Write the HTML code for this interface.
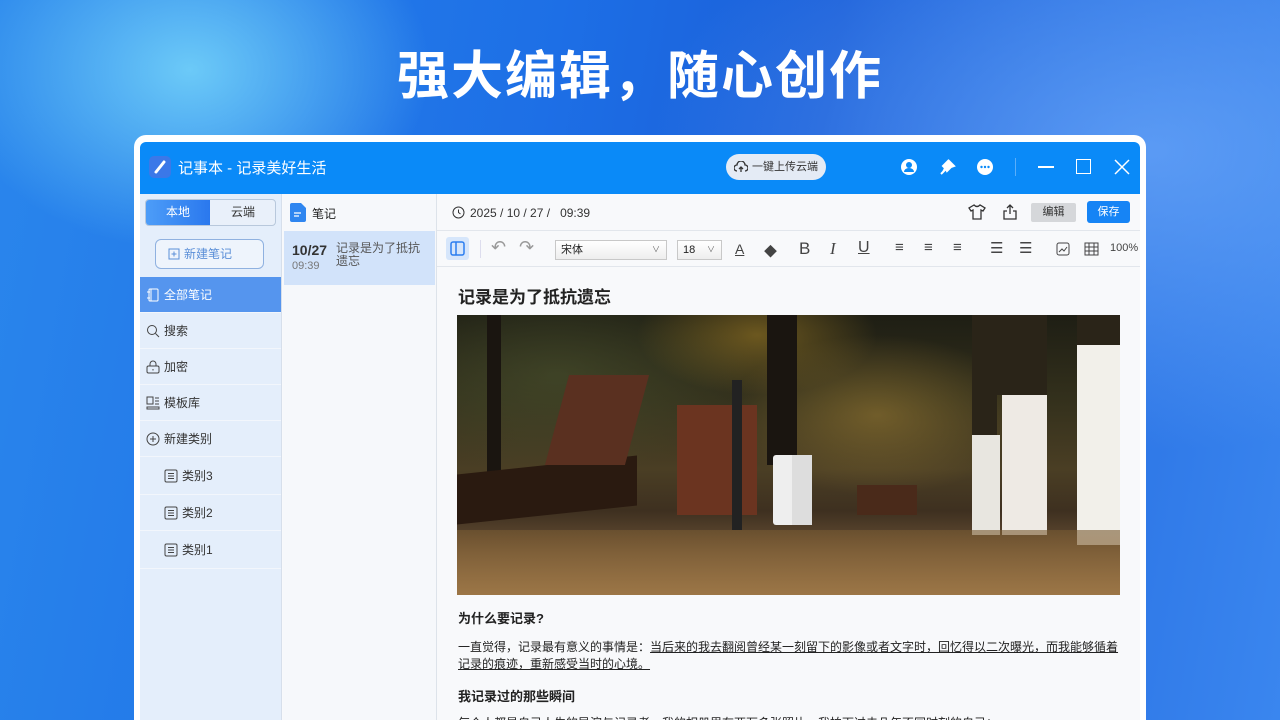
<!DOCTYPE html>
<html><head><meta charset="utf-8">
<style>
*{margin:0;padding:0;box-sizing:border-box}
html{width:1280px;height:720px;overflow:hidden}
body{width:1280px;height:720px;overflow:hidden;font-family:"Liberation Sans","Noto Sans CJK SC",sans-serif;position:relative;
background:radial-gradient(ellipse 240px 180px at 190px 70px,rgba(120,215,250,.85),rgba(120,220,250,0) 100%),
radial-gradient(ellipse 500px 300px at 1150px 150px,rgba(110,170,250,.7),rgba(110,170,250,0)),
linear-gradient(100deg,#2a86ec 0%,#1d6fe6 40%,#1a5ed8 60%,#3a86ef 100%);}
.hero{position:absolute;top:34px;left:0;width:1280px;text-align:center;color:#fff;font-size:52px;font-weight:bold;letter-spacing:2px;font-family:"Noto Sans CJK SC",sans-serif;}
.win{position:absolute;left:134px;top:135px;width:1012px;height:585px;background:#fff;border-radius:12px 12px 0 0;padding:7px 6px 0 6px;overflow:hidden}
.inner{position:relative;width:100%;height:100%;border-radius:6px 6px 0 0;overflow:hidden;background:#f8f9fb}
.title{position:absolute;left:0;top:0;width:1000px;height:52px;background:#0a8af8;color:#fff}
.abs{position:absolute}
.side{position:absolute;left:0;top:52px;width:142px;height:600px;background:#e4eefb;border-right:1px solid #d6dfeb}
.list{position:absolute;left:143px;top:52px;width:154px;height:600px;background:#f6f8fb;border-right:1px solid #dde3ea}
.ed{position:absolute;left:297px;top:52px;width:703px;height:600px;background:#f8f9fb}
.nav{position:absolute;left:0;width:141px;height:36px;border-bottom:1px solid #f2f6fc;font-size:12px;color:#333;display:flex;align-items:center;padding-left:6px}
.nav svg{margin-right:4px}
.tb{position:absolute;top:46px;font-size:12px;color:#444}
p.t{font-size:12px;color:#222;line-height:17px}
</style></head><body>
<div class="hero">强大编辑，随心创作</div>
<div class="win"><div class="inner">
<div class="title">
 <div class="abs" style="left:9px;top:14px;width:22px;height:22px;border-radius:5px;background:#3b78e8"><svg width="22" height="22"><path d="M7 16 L15 6" stroke="#fff" stroke-width="3" stroke-linecap="round"/></svg></div>
 <div class="abs" style="left:38px;top:15px;font-size:15px">记事本 - 记录美好生活</div>
 <div class="abs" style="left:586px;top:12px;width:100px;height:26px;border-radius:13px;background:#e4ebf5;color:#333;font-size:11px;line-height:26px;padding-left:26px">一键上传云端
  <svg class="abs" style="left:8px;top:7px" width="14" height="12"><path d="M3 10 A3 3 0 0 1 3 4 A4 4 0 0 1 11 4 A3 3 0 0 1 11 10 M7 11 V6 M5 8 L7 6 L9 8" stroke="#333" fill="none" stroke-width="1.3"/></svg></div>
 <svg class="abs" style="left:760px;top:16px" width="18" height="18"><circle cx="9" cy="9" r="8" fill="#fff"/><circle cx="9" cy="7" r="3" fill="#0a8af8"/><path d="M4 14 A5 4 0 0 1 14 14" fill="#0a8af8"/></svg>
 <svg class="abs" style="left:798px;top:16px" width="18" height="18"><path d="M10 2 L16 8 L13 9 L9 13 L8 11 L3 16 M8 11 L5 8 L9 4 Z" stroke="#fff" stroke-width="2" fill="#fff"/></svg>
 <svg class="abs" style="left:836px;top:16px" width="18" height="18"><circle cx="9" cy="9" r="8" fill="#fff"/><circle cx="5.5" cy="9" r="1.2" fill="#0a8af8"/><circle cx="9" cy="9" r="1.2" fill="#0a8af8"/><circle cx="12.5" cy="9" r="1.2" fill="#0a8af8"/></svg>
 <div class="abs" style="left:875px;top:16px;width:1px;height:18px;background:#5aaefa"></div>
 <div class="abs" style="left:898px;top:24px;width:16px;height:1.5px;background:#fff"></div>
 <div class="abs" style="left:936px;top:17px;width:15px;height:15px;border:1.5px solid #fff"></div>
 <svg class="abs" style="left:974px;top:17px" width="16" height="16"><path d="M1 1 L15 15 M15 1 L1 15" stroke="#fff" stroke-width="1.5"/></svg>
</div>
<div class="side">
 <div class="abs" style="left:5px;top:5px;width:131px;height:27px;border:1px solid #b8c8dc;border-radius:4px;background:#e9f0fa;overflow:hidden">
  <div class="abs" style="left:0;top:0;width:64px;height:25px;background:linear-gradient(90deg,#4d9df8,#2a78ee);color:#fff;font-size:12px;text-align:center;line-height:25px">本地</div>
  <div class="abs" style="left:64px;top:0;width:66px;height:25px;color:#333;font-size:12px;text-align:center;line-height:25px">云端</div>
 </div>
 <div class="abs" style="left:15px;top:45px;width:109px;height:30px;border:1px solid #8fb1e0;border-radius:6px;background:#eef4fc;color:#5b8fd8;font-size:12px;line-height:28px;padding-left:28px">新建笔记
  <svg class="abs" style="left:12px;top:8px" width="12" height="12"><rect x="1" y="1" width="10" height="10" fill="none" stroke="#5b8fd8"/><path d="M6 3.5 V8.5 M3.5 6 H8.5" stroke="#5b8fd8"/></svg></div>
 <div class="nav" style="top:83px;background:#5595ee;color:#fff"><svg width="14" height="14"><rect x="3" y="1" width="9" height="12" rx="1" fill="none" stroke="#fff"/><path d="M1 4 H4 M1 10 H4 M5 1 V13" stroke="#fff"/></svg>全部笔记</div>
 <div class="nav" style="top:119px"><svg width="14" height="14"><circle cx="6" cy="6" r="4.5" fill="none" stroke="#444"/><path d="M9.5 9.5 L13 13" stroke="#444"/></svg>搜索</div>
 <div class="nav" style="top:155px"><svg width="14" height="14"><rect x="1" y="6" width="12" height="7" rx="1.5" fill="none" stroke="#444"/><path d="M4 6 V4 A3 3 0 0 1 10 4 V6 M7 9 V10.5" stroke="#444" fill="none"/></svg>加密</div>
 <div class="nav" style="top:191px"><svg width="14" height="14"><rect x="1" y="1" width="6" height="7" fill="none" stroke="#444"/><path d="M9 2 H13 M9 5 H13 M9 8 H13 M1 11 H13 V13 H1 Z" stroke="#444" fill="none"/></svg>模板库</div>
 <div class="nav" style="top:227px"><svg width="14" height="14"><circle cx="7" cy="7" r="6" fill="none" stroke="#444"/><path d="M7 4 V10 M4 7 H10" stroke="#444"/></svg>新建类别</div>
 <div class="nav" style="top:263px;padding-left:24px;height:38px"><svg width="14" height="14"><rect x="1" y="1" width="12" height="12" rx="1.5" fill="none" stroke="#444"/><path d="M4 4.5 H10 M4 7 H10 M4 9.5 H10" stroke="#444"/></svg>类别3</div>
 <div class="nav" style="top:301px;padding-left:24px"><svg width="14" height="14"><rect x="1" y="1" width="12" height="12" rx="1.5" fill="none" stroke="#444"/><path d="M4 4.5 H10 M4 7 H10 M4 9.5 H10" stroke="#444"/></svg>类别2</div>
 <div class="nav" style="top:337px;padding-left:24px;height:38px"><svg width="14" height="14"><rect x="1" y="1" width="12" height="12" rx="1.5" fill="none" stroke="#444"/><path d="M4 4.5 H10 M4 7 H10 M4 9.5 H10" stroke="#444"/></svg>类别1</div>
</div>
<div class="list">
 <svg class="abs" style="left:7px;top:9px" width="16" height="19"><path d="M2 0 H11 L16 5 V17 A2 2 0 0 1 14 19 H2 A2 2 0 0 1 0 17 V2 A2 2 0 0 1 2 0Z" fill="#2f86f0"/><path d="M4 10 H11 M4 13 H9" stroke="#fff" stroke-width="1.3"/></svg>
 <div class="abs" style="left:29px;top:11px;font-size:12px;color:#222">笔记</div>
 <div class="abs" style="left:1px;top:37px;width:151px;height:54px;background:#d2e3fa"></div>
 <div class="abs" style="left:9px;top:48px;font-size:14px;font-weight:bold;color:#333">10/27</div>
 <div class="abs" style="left:9px;top:66px;font-size:11px;color:#777">09:39</div>
 <div class="abs" style="left:53px;top:48px;width:92px;font-size:12px;color:#555;line-height:13px">记录是为了抵抗遗忘</div>
</div>
<div class="ed">
 <div class="abs" style="left:0;top:0;width:703px;height:37px;border-bottom:1px solid #e2e6ec"></div>
 <svg class="abs" style="left:15px;top:12px" width="13" height="13"><circle cx="6.5" cy="6.5" r="5.5" fill="none" stroke="#333"/><path d="M6.5 3.5 V6.5 L8.5 8" stroke="#333" fill="none"/></svg>
 <div class="abs" style="left:33px;top:12px;font-size:12px;color:#333">2025 / 10 / 27 /&nbsp;&nbsp;&nbsp;09:39</div>
 <svg class="abs" style="left:531px;top:10px" width="18" height="16"><path d="M6 1 L1 4 L3 7 L5 6 V15 H13 V6 L15 7 L17 4 L12 1 Q9 4 6 1Z" fill="none" stroke="#333" stroke-width="1.3"/></svg>
 <svg class="abs" style="left:566px;top:9px" width="14" height="17"><path d="M7 11 V2 M4 5 L7 2 L10 5 M4 8 H1 V16 H13 V8 H10" fill="none" stroke="#333" stroke-width="1.3"/></svg>
 <div class="abs" style="left:594px;top:9px;width:45px;height:19px;background:#d5d7da;border-radius:2px;font-size:11px;text-align:center;line-height:19px;color:#333">编辑</div>
 <div class="abs" style="left:650px;top:7px;width:43px;height:22px;background:#1684f5;border-radius:3px;font-size:11px;text-align:center;line-height:22px;color:#fff">保存</div>
 <div class="abs" style="left:0;top:37px;width:703px;height:36px;border-bottom:1px solid #e2e6ec"></div>
 <div class="abs" style="left:9px;top:43px;width:23px;height:23px;background:#d6e6fb;border-radius:3px"><svg width="23" height="23"><rect x="5" y="5" width="13" height="13" rx="2" fill="none" stroke="#2c7ef0" stroke-width="1.5"/><path d="M10 5 V18" stroke="#2c7ef0" stroke-width="1.5"/></svg></div>
 <div class="abs" style="left:43px;top:46px;width:1px;height:18px;background:#dde"></div>
 <div class="tb" style="left:54px;top:43px;font-size:18px;color:#999">↶</div>
 <div class="tb" style="left:82px;top:43px;font-size:18px;color:#999">↷</div>
 <div class="abs" style="left:118px;top:46px;width:112px;height:20px;border:1px solid #c8c8c8;background:linear-gradient(#fff,#eee);font-size:11px;line-height:18px;padding-left:5px;color:#222">宋体<span style="position:absolute;right:6px;font-size:8px;color:#666">∨</span></div>
 <div class="abs" style="left:240px;top:46px;width:45px;height:20px;border:1px solid #c8c8c8;background:linear-gradient(#fff,#eee);font-size:11px;line-height:18px;padding-left:5px;color:#222">18<span style="position:absolute;right:6px;font-size:8px;color:#666">∨</span></div>
 <div class="tb" style="left:298px;top:47px;font-size:14px;text-decoration:underline;color:#444">A</div>
 <div class="tb" style="left:327px;top:47px;font-size:13px;color:#444">◆</div>
 <div class="tb" style="left:362px;top:45px;font-size:17px;color:#444">B</div>
 <div class="tb" style="left:393px;top:45px;font-size:17px;font-style:italic;color:#444;font-family:'Liberation Serif',serif">I</div>
 <div class="tb" style="left:421px;top:45px;font-size:16px;text-decoration:underline;color:#444">U</div>
 <div class="tb" style="left:458px;top:45px;font-size:15px">≡</div>
 <div class="tb" style="left:487px;top:45px;font-size:15px">≡</div>
 <div class="tb" style="left:516px;top:45px;font-size:15px">≡</div>
 <div class="tb" style="left:553px;top:45px;font-size:15px">☰</div>
 <div class="tb" style="left:582px;top:45px;font-size:15px">☰</div>
 <svg class="abs" style="left:619px;top:48px" width="14" height="14"><rect x="1" y="1" width="12" height="12" rx="2" fill="none" stroke="#444"/><path d="M3 10 L6 7 L8 9 L11 5" stroke="#444" fill="none"/></svg>
 <svg class="abs" style="left:647px;top:48px" width="15" height="14"><rect x="1" y="1" width="13" height="12" fill="none" stroke="#444"/><path d="M1 5 H14 M1 9 H14 M5 1 V13 M10 1 V13" stroke="#444"/></svg>
 <div class="tb" style="left:673px;top:48px;font-size:11px">100%</div>
 <div class="abs" style="left:21px;top:89px;font-size:17px;font-weight:bold;color:#222">记录是为了抵抗遗忘</div>
 <div class="abs" style="left:20px;top:121px;width:663px;height:280px;overflow:hidden;background:linear-gradient(180deg,#1e1e14 0%,#33301c 30%,#4a3e24 55%,#3e3020 70%,#6b5236 85%,#8a6d48 100%)">
  <div class="abs" style="left:0;top:0;width:663px;height:200px;background:radial-gradient(ellipse 150px 80px at 420px 100px,rgba(150,120,50,.6),transparent),radial-gradient(ellipse 120px 60px at 300px 20px,rgba(180,140,40,.5),transparent),radial-gradient(ellipse 200px 100px at 100px 60px,rgba(80,90,50,.5),transparent)"></div>
  <div class="abs" style="left:220px;top:90px;width:80px;height:110px;background:#6b3420"></div>
  <div class="abs" style="left:30px;top:0;width:14px;height:200px;background:#1a1510"></div>
  <div class="abs" style="left:310px;top:0;width:30px;height:150px;background:#1a1510"></div>
  <div class="abs" style="left:316px;top:140px;width:25px;height:70px;background:#eee;border-radius:3px"></div>
  <div class="abs" style="left:335px;top:140px;width:20px;height:70px;background:#ddd"></div>
  <div class="abs" style="left:515px;top:120px;width:28px;height:100px;background:#e8e6e0"></div>
  <div class="abs" style="left:545px;top:80px;width:45px;height:140px;background:#eeeae4"></div>
  <div class="abs" style="left:620px;top:30px;width:43px;height:200px;background:#f2f0ea"></div>
  <div class="abs" style="left:540px;top:0;width:50px;height:80px;background:#2a2418"></div>
  <div class="abs" style="left:515px;top:0;width:25px;height:120px;background:#2a2418"></div>
  <div class="abs" style="left:620px;top:0;width:43px;height:30px;background:#2a2418"></div>
  <div class="abs" style="left:0;top:150px;width:180px;height:50px;background:#2a1a10;transform:skewY(-6deg)"></div>
  <div class="abs" style="left:100px;top:60px;width:80px;height:90px;background:#5a3020;transform:skewX(-15deg)"></div>
  <div class="abs" style="left:275px;top:65px;width:10px;height:150px;background:#222"></div>
  <div class="abs" style="left:400px;top:170px;width:60px;height:30px;background:#4a2a1a"></div>
  <div class="abs" style="left:0;top:215px;width:663px;height:65px;background:linear-gradient(180deg,rgba(120,90,50,.6),rgba(160,120,70,.8))"></div>
 </div>
 <div class="abs" style="left:21px;top:414px;font-size:13px;font-weight:bold;color:#222">为什么要记录?</div>
 <p class="t abs" style="left:21px;top:445px;width:665px">一直觉得，记录最有意义的事情是：<span style="text-decoration:underline">当后来的我去翻阅曾经某一刻留下的影像或者文字时，回忆得以二次曝光，而我能够循着记录的痕迹，重新感受当时的心境。</span></p>
 <div class="abs" style="left:21px;top:492px;font-size:13px;font-weight:bold;color:#222">我记录过的那些瞬间</div>
 <p class="t abs" style="left:21px;top:521px;width:665px">每个人都是自己人生的导演与记录者，我的相册里有两万多张照片，我拍下过去几年不同时刻的自己：</p>
</div>
</div></div>
</body></html>
